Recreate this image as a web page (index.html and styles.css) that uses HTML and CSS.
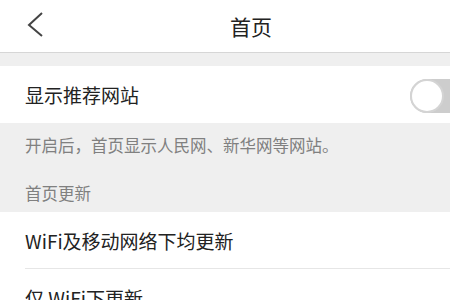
FILE: index.html
```html
<!DOCTYPE html>
<html lang="zh-CN">
<head>
<meta charset="utf-8">
<link rel="stylesheet" href="styles.css">
</head>
<body>
<div class="page">
  <header class="nav">
    <span class="back">
      <svg width="20" height="30" viewBox="0 0 20 30"><polyline points="15,1 2,13 15,24" fill="none" stroke="#444" stroke-width="2"/></svg>
    </span>
    <span class="title">首页</span>
  </header>
  <div class="gap"></div>
  <div class="row row-switch">
    <span class="label">显示推荐网站</span>
    <span class="switch"><span class="knob"></span></span>
  </div>
  <div class="info">
    <p class="desc">开启后，首页显示人民网、新华网等网站。</p>
    <p class="section">首页更新</p>
  </div>
  <div class="list">
    <div class="row item"><span class="label">WiFi及移动网络下均更新</span></div>
    <div class="row item"><span class="label">仅 WiFi下更新</span></div>
  </div>
</div>
</body>
</html>
```

FILE: styles.css
```css
html, body {
  margin: 0;
  padding: 0;
  background: #ffffff;
}
.page {
  width: 450px;
  height: 300px;
  overflow: hidden;
  font-family: "Noto Sans CJK SC", "Noto Sans", sans-serif;
  color: #222;
  background: #efefef;
}
.nav {
  height: 52px;
  background: #fff;
  border-bottom: 1px solid #d6d6d6;
  display: flex;
  align-items: center;
  position: relative;
}
.back {
  display: flex;
  padding-left: 27px;
  padding-top: 2px;
}
.title {
  margin-left: 183px;
  font-size: 21px;
  line-height: 1;
  color: #222;
}
.gap {
  height: 13px;
}
.row {
  background: #fff;
  display: flex;
  align-items: center;
}
.row-switch {
  height: 57px;
  padding-left: 25px;
  justify-content: space-between;
}
.label {
  font-size: 19px;
  line-height: 1;
}
.switch {
  width: 60px;
  height: 34px;
  margin-right: -20px;
  margin-top: 2px;
  border-radius: 17px 0 0 17px;
  background: #cdcdcd;
  display: flex;
  align-items: center;
  padding-left: 0;
}
.knob {
  width: 30px;
  height: 30px;
  border-radius: 50%;
  background: #fff;
  border: 2px solid #d4d4d4;
}
.info {
  height: 89px;
  padding-left: 25px;
  color: #808080;
}
.desc {
  margin: 0;
  padding-top: 13px;
  font-size: 16.5px;
  line-height: 18px;
}
.section {
  margin: 0;
  padding-top: 30px;
  font-size: 16.5px;
  line-height: 18px;
}
.list {
  background: #fff;
  padding-left: 25px;
}
.item {
  height: 56px;
  border-bottom: 1px solid #e6e6e6;
}
```
